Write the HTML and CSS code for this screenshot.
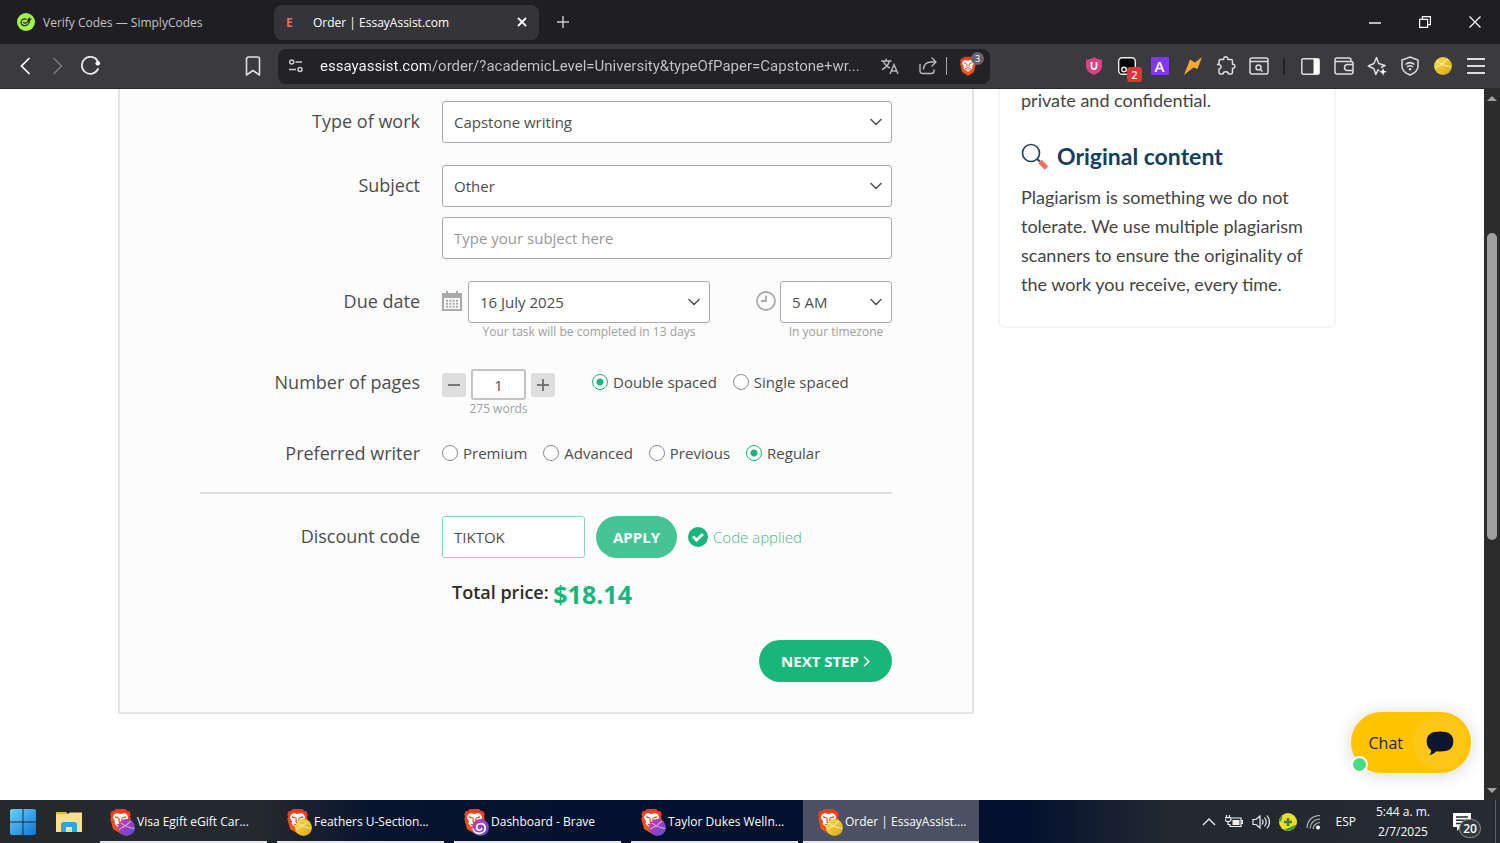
FILE: index.html
```html
<!DOCTYPE html>
<html lang="en">
<head>
<meta charset="utf-8">
<meta name="viewport" content="width=device-width, initial-scale=1">
<title>Order | EssayAssist.com</title>
<link rel="stylesheet" href="styles.css">
</head>
<body>
<svg class="sprite" aria-hidden="true">
  <defs>
    <linearGradient id="flame" x1="0" y1="0" x2="0" y2="1"><stop offset="0" stop-color="#f0391e"/><stop offset="1" stop-color="#fb5a12"/></linearGradient>
    <linearGradient id="violet" x1="0" y1="0" x2="1" y2="1"><stop offset="0" stop-color="#c23fae"/><stop offset=".5" stop-color="#9a3fc0"/><stop offset="1" stop-color="#4a55d8"/></linearGradient>
    <linearGradient id="gold" x1="0" y1="0" x2="1" y2="1"><stop offset="0" stop-color="#fbe04a"/><stop offset="1" stop-color="#d8a514"/></linearGradient>
    <linearGradient id="win" x1="0" y1="0" x2="1" y2="1"><stop offset="0" stop-color="#6bd0fa"/><stop offset="1" stop-color="#0a78d6"/></linearGradient>
    <symbol id="lion" viewBox="0 0 24 28">
      <path fill="url(#flame)" d="M7 1h10l2.500 2.500 2-.3L23 7l-.8 2.200.8 2.500-3 11L12 27.500 4 22.700l-3-11 .8-2.500L1 7l1.500-3.800 2 .3z"/>
      <path fill="#fff" d="M12 6.500l4-1 3 1.500 1.300 3.500-2.500 3.800.7 2.700-2.400 2L12 22.500l-4.100-3.500-2.400-2 .7-2.700-2.500-3.800L5 7l3-1.500z"/>
      <path fill="none" stroke="#f0441c" stroke-width="1.300" d="M6 9.500l4 1.200M18 9.500l-4 1.200M10.500 11v4l1.500 1.500 1.500-1.500v-4M8 17.500l4 1 4-1"/>
    </symbol>
    <symbol id="ball" viewBox="0 0 18 18">
      <circle cx="9" cy="9" r="9"/>
      <path fill="none" stroke="#fff" stroke-opacity=".6" stroke-width="1.100" d="M1 11Q8 8 14 2M3 4q6 5 14 6"/>
    </symbol>
    <symbol id="chevron" viewBox="0 0 12 8"><path fill="none" stroke="currentColor" stroke-width="1.600" stroke-linecap="round" stroke-linejoin="round" d="M1 1.500l5 5 5-5"/></symbol>
  </defs>
</svg>

<header class="browser">
  <div class="tabs">
    <div class="tab tab-idle">
      <svg class="favicon" viewBox="0 0 18 18"><circle cx="9" cy="9" r="9" fill="#a6f04a"/><path fill="none" stroke="#1c2a10" stroke-width="1.200" stroke-linecap="round" d="M9.500 6.200C6.500 5.200 4 7 4 9.500s2.500 3.500 5 2.800 3.700-3 3.200-5.300M6.500 9.500c1.500 1.200 3.200.4 4.500-1.200l3-2.300M11 7l1.500-2"/></svg>
      <span>Verify Codes — SimplyCodes</span>
    </div>
    <div class="tab tab-active">
      <span class="ea"><b>E</b><b class="ea-dark">A</b></span>
      <span class="tab-title">Order | EssayAssist.com</span>
      <button class="icon-btn tab-close" aria-label="Close tab"><svg width="10" height="10" viewBox="0 0 10 10"><path stroke="#fff" stroke-width="1.800" d="M1 1l8 8M9 1L1 9"/></svg></button>
    </div>
    <button class="icon-btn new-tab" aria-label="New tab"><svg width="12" height="12" viewBox="0 0 12 12"><path stroke="#ccc" stroke-width="1.400" d="M6 0v12M0 6h12"/></svg></button>
    <div class="window-controls">
      <button class="icon-btn" aria-label="Minimize"><svg width="12" height="12" viewBox="0 0 12 12"><path stroke="#bbb" stroke-width="2" d="M0 7h12"/></svg></button>
      <button class="icon-btn" aria-label="Restore"><svg width="12" height="12" viewBox="0 0 12 12"><path fill="none" stroke="#fff" stroke-width="1.200" d="M.6 3.400h8v8h-8zM3.400 3V.6h8v8H9"/></svg></button>
      <button class="icon-btn" aria-label="Close"><svg width="12" height="12" viewBox="0 0 12 12"><path stroke="#fff" stroke-width="1.200" d="M.5.5l11 11M11.500.5l-11 11"/></svg></button>
    </div>
  </div>

  <div class="toolbar">
    <button class="icon-btn slot" aria-label="Back"><svg width="10" height="18" viewBox="0 0 10 18"><path fill="none" stroke="#fff" stroke-width="1.700" stroke-linecap="round" d="M9 1.500L1.500 9 9 16.500"/></svg></button>
    <button class="icon-btn slot" aria-label="Forward"><svg width="10" height="18" viewBox="0 0 10 18"><path fill="none" stroke="#77777b" stroke-width="1.700" stroke-linecap="round" d="M1 1.500L8.500 9 1 16.500"/></svg></button>
    <button class="icon-btn slot" aria-label="Reload"><svg width="20" height="20" viewBox="0 0 20 20"><path fill="none" stroke="#e8e8e8" stroke-width="1.800" stroke-linecap="round" d="M16.500 4.700A8.500 8.500 0 1 0 17 13"/><circle cx="16.800" cy="7.300" r="2.300" fill="#fff"/></svg></button>
    <button class="icon-btn slot bookmark" aria-label="Bookmark"><svg width="16" height="20" viewBox="0 0 16 20"><path fill="none" stroke="#e0e0e0" stroke-width="1.600" stroke-linejoin="round" d="M1.500 3a2 2 0 0 1 2-2h9a2 2 0 0 1 2 2v16L8 14.500 1.500 19z"/></svg></button>
    <div class="address">
      <svg width="14" height="14" viewBox="0 0 14 14"><g fill="none" stroke="#ccc" stroke-width="1.500"><circle cx="2.700" cy="3" r="2"/><path d="M6.500 3H13M0 10.500h7"/><circle cx="11" cy="10.500" r="2"/></g></svg>
      <input class="url" type="text" aria-label="Address" value="essayassist.com/order/?academicLevel=University&amp;typeOfPaper=Capstone+wr...">
      <svg class="translate" width="18" height="17" viewBox="0 0 18 17"><path fill="none" stroke="#bbb" stroke-width="1.400" d="M0 3h10.500M5.200.5V3M2.500 3.500C4 7 6 8.800 9 10M8.200 3.500C7.500 7 5 9.500 1 11.500M9 16l4-9.500L17 16M10.300 13h5.400"/></svg>
      <svg class="share" width="18" height="18" viewBox="0 0 18 18"><path fill="none" stroke="#bbb" stroke-width="1.400" stroke-linejoin="round" stroke-linecap="round" d="M1 7.500V14a2.500 2.500 0 0 0 2.500 2.500h9A2.500 2.500 0 0 0 15 14v-1M4.500 12C5 7.500 8 5 12 5h4.500M13 1l4 4-4 4"/></svg>
      <span class="address-rule"></span>
      <span class="shields"><svg width="18" height="20"><use href="#lion"/></svg><span class="shield-count">3</span></span>
    </div>
    <div class="extensions">
      <button class="icon-btn slot" aria-label="uBlock"><svg width="16" height="18" viewBox="0 0 16 18"><path fill="#df3f83" d="M8 0c2.500 1.800 5 2.600 8 2.800V9c0 4.500-4 7.500-8 9-4-1.500-8-4.500-8-9V2.800C3 2.600 5.500 1.800 8 0z"/><path fill="none" stroke="#fff" stroke-width="1.800" d="M5.500 5v4.500a2.500 2.500 0 0 0 5 0V5"/></svg></button>
      <button class="icon-btn slot counted" aria-label="Tampermonkey"><svg width="18" height="18" viewBox="0 0 18 18"><rect x=".7" y=".7" width="16.600" height="16.600" rx="3.500" fill="#050505" stroke="#eee" stroke-width="1.400"/><circle cx="6" cy="12.500" r="2.300" fill="none" stroke="#eee" stroke-width="1.400"/></svg><span class="count">2</span></button>
      <button class="icon-btn slot" aria-label="A extension"><span class="a-box">A</span></button>
      <button class="icon-btn slot" aria-label="Lightning"><svg width="18" height="18" viewBox="0 0 18 18"><path fill="#f9a62b" d="M6 2.500L11 5.500 18 0l-4.500 12L9.500 10.500 0 18z"/></svg></button>
      <button class="icon-btn slot" aria-label="Extensions"><svg width="20" height="20" viewBox="0 0 20 20"><path fill="none" stroke="#ddd" stroke-width="1.500" stroke-linejoin="round" d="M4.500 3.500h3.200c-.6-3.600 4.700-3.600 4.100 0H15a1.500 1.500 0 0 1 1.500 1.500v3.200c3.200-.5 3.200 4.600 0 4.100V16.500a1.500 1.500 0 0 1-1.500 1.500h-2.500c0-3-5.500-3-5.500 0H4.500A1.500 1.500 0 0 1 3 16.500V13c3-.3 3-4.700-1.500-4.500L3 7.500V5a1.500 1.500 0 0 1 1.500-1.500z"/></svg></button>
      <button class="icon-btn slot" aria-label="Search page"><svg width="20" height="18" viewBox="0 0 20 18"><g fill="none" stroke="#ddd" stroke-width="1.500"><rect x="1" y="1" width="18" height="16" rx="2"/><path d="M1 4.500h18M11.500 12.500l2 2"/><circle cx="9.500" cy="10.500" r="2.500"/></g></svg></button>
      <span class="toolbar-rule"></span>
      <button class="icon-btn slot" aria-label="Sidebar"><svg width="19" height="17" viewBox="0 0 19 17"><rect x=".8" y=".8" width="17.400" height="15.400" rx="1.500" fill="none" stroke="#ddd" stroke-width="1.500"/><path fill="#fff" d="M12.500 1H18v15h-5.500z"/></svg></button>
      <button class="icon-btn slot" aria-label="Wallet"><svg width="20" height="18" viewBox="0 0 20 18"><g fill="none" stroke="#ddd" stroke-width="1.500"><path d="M17 4.500V3a2 2 0 0 0-2-2H3a2 2 0 0 0-2 2v12a2 2 0 0 0 2 2h14a2 2 0 0 0 2-2V6.500a2 2 0 0 0-2-2H1"/><path d="M19 7.500h-5.500a3 3 0 0 0 0 6H19"/></g></svg></button>
      <button class="icon-btn slot" aria-label="Leo AI"><svg width="20" height="20" viewBox="0 0 20 20"><path fill="none" stroke="#ddd" stroke-width="1.500" stroke-linejoin="round" d="M12.500 14.500l-1.600-.5-2 4.500-2-5.800L1.300 10 7 7.500 9.500 1.500l2.200 6L18 9.500l-4 2"/><path fill="#fff" d="M16 12l1 2.800 2.800 1-2.800 1-1 2.900-1-2.900-2.800-1 2.800-1z"/></svg></button>
      <button class="icon-btn slot" aria-label="VPN"><svg width="18" height="20" viewBox="0 0 18 20"><g fill="none" stroke="#ddd" stroke-width="1.500"><path d="M9 1l8 3v6c0 4-3 7-8 9-5-2-8-5-8-9V4z"/><path d="M4.500 8.500c3-2.500 6-2.500 9 0M6 11c2-1.600 4-1.600 6 0"/></g><circle cx="9" cy="13.300" r="1.200" fill="#ddd"/></svg></button>
      <button class="icon-btn slot" aria-label="Profile"><svg width="18" height="18" fill="url(#gold)"><use href="#ball"/></svg></button>
      <button class="icon-btn slot" aria-label="Menu"><svg width="18" height="16" viewBox="0 0 18 16"><path stroke="#ddd" stroke-width="1.800" d="M0 1h18M0 8h18M0 15h18"/></svg></button>
    </div>
  </div>
</header>

<div class="viewport">
  <main class="page">
    <form class="order" onsubmit="return false">
      <div class="row">
        <label class="label" for="work">Type of work</label>
        <div class="select"><select id="work"><option>Capstone writing</option></select><svg><use href="#chevron"/></svg></div>
      </div>
      <div class="row">
        <label class="label" for="subject">Subject</label>
        <div class="stack">
          <div class="select"><select id="subject"><option>Other</option></select><svg><use href="#chevron"/></svg></div>
          <input class="box" type="text" placeholder="Type your subject here" aria-label="Your subject">
        </div>
      </div>
      <div class="row">
        <label class="label" for="due">Due date</label>
        <div class="due">
          <svg class="due-icon" viewBox="0 0 20 20"><path fill="#aaa" d="M0 2h4V0h2v2h8V0h2v2h4v18H0z"/><path fill="#fcfcfc" d="M2 7h16v11H2z"/><path stroke="#aaa" stroke-width="2" stroke-dasharray="2 1.300" d="M4 9.700h12M4 12.700h12M4 15.700h12"/></svg>
          <div class="date">
            <div class="select"><select id="due"><option>16 July 2025</option></select><svg><use href="#chevron"/></svg></div>
            <p class="hint">Your task will be completed in 13 days</p>
          </div>
          <svg class="due-icon clock" viewBox="0 0 20 20"><circle cx="10" cy="10" r="9" fill="none" stroke="#aaa" stroke-width="1.800"/><path fill="none" stroke="#aaa" stroke-width="1.800" d="M10 4.500V10H5"/></svg>
          <div class="hour">
            <div class="select"><select id="hour" aria-label="Hour"><option>5 AM</option></select><svg><use href="#chevron"/></svg></div>
            <p class="hint">In your timezone</p>
          </div>
        </div>
      </div>
      <div class="row row-pages">
        <label class="label" for="pages">Number of pages</label>
        <div class="pages">
          <div class="counter">
            <button type="button" class="step" aria-label="Fewer pages"><svg width="12" height="12" viewBox="0 0 12 12"><path stroke="#777" stroke-width="2" d="M0 6h12"/></svg></button>
            <input class="box page-count" id="pages" type="text" value="1">
            <button type="button" class="step" aria-label="More pages"><svg width="12" height="12" viewBox="0 0 12 12"><path stroke="#777" stroke-width="2" d="M0 6h12M6 0v12"/></svg></button>
            <p class="hint words">275 words</p>
          </div>
          <div class="radios">
            <label><input type="radio" name="spacing" checked>Double spaced</label>
            <label><input type="radio" name="spacing">Single spaced</label>
          </div>
        </div>
      </div>
      <div class="row row-writer">
        <span class="label" id="writer">Preferred writer</span>
        <div class="radios" role="radiogroup" aria-labelledby="writer">
          <label><input type="radio" name="writer">Premium</label>
          <label><input type="radio" name="writer">Advanced</label>
          <label><input type="radio" name="writer">Previous</label>
          <label><input type="radio" name="writer" checked>Regular</label>
        </div>
      </div>
      <hr class="rule">
      <div class="row">
        <label class="label" for="code">Discount code</label>
        <div class="discount">
          <input class="box code" id="code" type="text" value="TIKTOK">
          <button type="button" class="pill apply">APPLY</button>
          <span class="applied"><svg width="20" height="20" viewBox="0 0 20 20"><circle cx="10" cy="10" r="10" fill="#19b67b"/><path fill="none" stroke="#fff" stroke-width="2.800" d="M5 9.500l3.500 3.500L15 7"/></svg>Code applied</span>
        </div>
      </div>
      <p class="total">Total price: <strong>$18.14</strong></p>
      <button type="submit" class="pill next">NEXT STEP<svg width="7" height="11" viewBox="0 0 7 11"><path fill="none" stroke="#fff" stroke-width="1.600" d="M1 .8l4.700 4.700L1 10.200"/></svg></button>
    </form>
    <aside class="benefits">
      <p class="lead">private and confidential.</p>
      <h2><svg width="28" height="28" viewBox="0 0 28 28"><circle cx="10" cy="10" r="8.500" fill="none" stroke="#2c4356" stroke-width="1.700"/><path stroke="#2c4356" stroke-width="2" d="M16 16l3 2.500"/><path stroke="#f5705a" stroke-width="5" d="M19 18.500l6.500 6.500"/></svg>Original content</h2>
      <p>Plagiarism is something we do not tolerate. We use multiple plagiarism scanners to ensure the originality of the work you receive, every time.</p>
    </aside>
  </main>
  <button class="chat">Chat<span class="chat-disc"><svg width="28" height="26" viewBox="0 0 28 26"><path fill="#0d1830" d="M14 1.500c9 0 13.300 3 13.300 10S23 21.500 14 21.500c-1.500 0-2.700 0-3.800-.3C8.500 23 6.500 24.500 3.700 25c1-1.500 1.500-3 1.300-5C2 18.300.7 15.500.7 11.500c0-7 4.300-10 13.300-10z"/></svg></span><span class="online"></span></button>
  <div class="scrollbar" aria-hidden="true"><span class="arrow up"></span><span class="thumb"></span><span class="arrow down"></span></div>
</div>

<footer class="taskbar">
  <button class="icon-btn start" aria-label="Start"><svg width="26" height="26" viewBox="0 0 26 26"><path fill="url(#win)" d="M0 2a2 2 0 0 1 2-2h10.500v12.500H0zM13.500 0H24a2 2 0 0 1 2 2v10.500H13.500zM0 13.500h12.500V26H2a2 2 0 0 1-2-2zM13.500 13.500H26V24a2 2 0 0 1-2 2H13.500z"/></svg></button>
  <button class="icon-btn explorer" aria-label="File Explorer"><svg width="26" height="22" viewBox="0 0 26 22"><path fill="#e5b93c" d="M0 1h10l3 3H0z"/><path fill="#fde08d" d="M0 3.500L12 3l2-1.500h12V21H0z"/><path fill="#2da6df" d="M5 21V12.500L7 11h12l2 1.500V21h-5v-5h-6v5z"/></svg></button>
  <button class="task"><span class="task-icon"><svg class="task-lion"><use href="#lion"/></svg><svg class="task-ball" fill="url(#violet)"><use href="#ball"/></svg></span>Visa Egift eGift Car...</button>
  <button class="task"><span class="task-icon"><svg class="task-lion"><use href="#lion"/></svg><svg class="task-ball" fill="url(#gold)"><use href="#ball"/></svg></span>Feathers U-Section...</button>
  <button class="task"><span class="task-icon"><svg class="task-lion"><use href="#lion"/></svg><svg class="task-ball" viewBox="0 0 18 18"><circle cx="9" cy="9" r="9" fill="url(#violet)"/><path fill="none" stroke="#fff" stroke-width="1.800" d="M1 10c2 8 14 6 13-1-1-6-9-5-9 0 0 3.500 5 4 5.500.5"/></svg></span>Dashboard - Brave</button>
  <button class="task"><span class="task-icon"><svg class="task-lion"><use href="#lion"/></svg><svg class="task-ball" fill="url(#violet)"><use href="#ball"/></svg></span>Taylor Dukes Welln...</button>
  <button class="task task-active"><span class="task-icon"><svg class="task-lion"><use href="#lion"/></svg><svg class="task-ball" fill="url(#gold)"><use href="#ball"/></svg></span>Order | EssayAssist....</button>
  <div class="tray">
    <svg width="14" height="8" viewBox="0 0 14 8"><path fill="none" stroke="#eee" stroke-width="1.400" d="M1 7l6-6 6 6"/></svg>
    <svg width="18" height="14" viewBox="0 0 18 14"><path fill="none" stroke="#eee" stroke-width="1.200" d="M7 3h9v8.500H5V9M16.500 5.500h1v3h-1M1.500 0v2.500M4.500 0v2.500M0 2.700h6V5L4.500 6.500h-3L0 5zM3 6.500v3h2"/><path fill="#eee" d="M7.500 5h7v5h-7z"/></svg>
    <svg width="18" height="16" viewBox="0 0 18 16"><path fill="none" stroke="#eee" stroke-width="1.200" d="M1 5.500h3L8 2v12l-4-3.500H1zM10 5.500q2 2.500 0 5M12.500 3.500q3.500 4.500 0 9M15 1.500q5 6.500 0 13"/></svg>
    <svg width="18" height="18" viewBox="0 0 18 18"><circle cx="9" cy="9" r="9" fill="#f1dc2d"/><path fill="#3e9b3c" d="M0 9a9 9 0 0 1 3-6.700Q4 8 0 9zM5 17q8-4 12.500-5.500A9 9 0 0 1 5 17z"/><path stroke="#2d8a34" stroke-width="2.600" d="M9 5v8M5 9h8"/></svg>
    <svg width="16" height="16" viewBox="0 0 16 16"><g fill="none" stroke="#bbb" stroke-width="1.200"><path d="M1 14Q2 2 14 1.500M4 14.500Q5 5.500 14 5M7 15q1-6 7-6.500"/></g><circle cx="12" cy="13.500" r="2" fill="#fff"/></svg>
    <span class="lang">ESP</span>
    <span class="time">5:44 a. m.<br>2/7/2025</span>
    <span class="notes"><svg width="18" height="18" viewBox="0 0 18 18"><path fill="#fff" d="M0 0h18v14H8l-4 4v-4H0z"/><path stroke="#252b32" stroke-width="1.400" d="M3 4h12M3 7.300h12M3 10.500h7"/></svg><span class="notes-count">20</span></span>
    <span class="desktop-edge"></span>
  </div>
</footer>
</body>
</html>
```
FILE: styles.css
```css
* { box-sizing: border-box; }

body {
  display: flex;
  flex-direction: column;
  height: 100vh;
  margin: 0;
  overflow: hidden;
  background: #fff;
  color: #4d4d4d;
  font-family: "Open Sans", "Noto Sans", sans-serif;
}

p, h2 { margin: 0; }
button, input, select { font: inherit; color: inherit; }
svg { flex: none; display: block; }
.sprite { position: absolute; width: 0; height: 0; }

.icon-btn {
  display: flex;
  align-items: center;
  justify-content: center;
  padding: 0;
  border: 0;
  background: none;
}

/* Browser chrome */
.tabs {
  display: flex;
  align-items: center;
  height: 44px;
  background: #1f1e23;
  color: #c3c3c5;
  font-size: 12px;
}
.tab { display: flex; align-items: center; height: 35px; border-radius: 8px; }
.tab-idle { width: 265px; margin-left: 9px; padding-left: 8px; gap: 8px; }
.tab-active { width: 265px; padding: 0 12px; background: #353439; color: #fff; }
.favicon { width: 18px; height: 18px; }
.ea { display: flex; width: 27px; color: #ee6c55; font-size: 12px; }
.ea-dark { color: #2a3947; }
.tab-title { flex: 1; }
.new-tab { width: 24px; height: 24px; margin-left: 12px; }
.window-controls { display: flex; margin-left: auto; }
.window-controls .icon-btn { width: 50px; height: 44px; }

.toolbar {
  display: flex;
  align-items: center;
  height: 45px;
  padding: 0 8px;
  border-bottom: 1px solid #29282c;
  background: #3b3a3f;
}
.slot { flex: none; width: 33px; height: 33px; }
.bookmark { margin-left: 129px; }
.address {
  display: flex;
  align-items: center;
  flex: 0 1 712px;
  min-width: 0;
  height: 35px;
  margin-left: 9px;
  padding: 0 8px 0 11px;
  border-radius: 8px;
  background: #232227;
}
.url {
  flex: 1;
  min-width: 0;
  margin-left: 17px;
  padding: 0;
  border: 0;
  outline: 0;
  background: linear-gradient(90deg, #fff 106px, #c6c6c8 106px) text;
  color: transparent;
  font-family: Roboto, sans-serif;
  font-size: 15px;
}
.translate { margin-left: 12px; }
.share { margin-left: 20px; }
.address-rule { width: 1px; height: 18px; margin: 0 12px 0 9px; background: #aaa; }
.shields { position: relative; margin-right: 5px; }
.shield-count {
  position: absolute;
  top: -4px;
  right: -7px;
  width: 13px;
  height: 13px;
  border-radius: 7px;
  background: #63646f;
  color: #fff;
  font-size: 9px;
  line-height: 13px;
  text-align: center;
}
.extensions { display: flex; align-items: center; margin-left: auto; }
.toolbar-rule { width: 2px; height: 17px; margin: 0 9px 0 8px; background: #232227; }
.counted { position: relative; }
.count {
  position: absolute;
  right: 1px;
  bottom: 1px;
  width: 15px;
  height: 15px;
  border-radius: 3px;
  background: #e33237;
  color: #fff;
  font-size: 11px;
  font-weight: 600;
  line-height: 15px;
}
.a-box {
  width: 18px;
  height: 18px;
  background: #8336f0;
  color: #fff;
  font-size: 15px;
  font-weight: 600;
  line-height: 18px;
}

/* Page */
.viewport { position: relative; display: flex; flex: 1; min-height: 0; }
.page {
  display: flex;
  align-items: flex-start;
  flex: 1;
  gap: 24px;
  min-width: 0;
  padding: 0 148px 0 118px;
}
.order {
  display: flex;
  flex-direction: column;
  flex: 1;
  gap: 22px;
  min-width: 0;
  padding: 12px 80px 30px;
  border: 2px solid #e4e4e4;
  border-top: 0;
  background: #fcfcfc;
  font-size: 15px;
}
.row {
  display: grid;
  grid-template-columns: minmax(150px, 220px) minmax(0, 1fr);
  column-gap: 22px;
}
.label { font-size: 18px; line-height: 40px; text-align: right; }
.stack { display: grid; gap: 10px; }
.select { position: relative; }
.select select, .box {
  display: block;
  width: 100%;
  height: 42px;
  padding: 0 11px;
  border: 1px solid #a9a9a9;
  border-radius: 3px;
  outline: 0;
  background: #fff;
  appearance: none;
}
.box::placeholder { color: #999; opacity: 1; }
.select svg {
  position: absolute;
  top: 17px;
  right: 10px;
  width: 12px;
  height: 8px;
  color: #555;
  pointer-events: none;
}
.hint { color: #a0a0a0; font-size: 12px; line-height: 18px; text-align: center; white-space: nowrap; }

.due { display: flex; align-items: flex-start; }
.due-icon { width: 20px; height: 20px; margin-top: 10px; }
.date { width: 242px; margin-left: 6px; }
.clock { margin-left: auto; }
.hour { width: 112px; margin-left: 4px; }

.row-pages { margin-top: 6px; }
.row-pages .label, .row-writer .label { line-height: 26px; }
.pages { display: flex; }
.counter {
  display: grid;
  grid-template-columns: 24px 55px 24px;
  column-gap: 5px;
  align-items: center;
}
.step {
  display: grid;
  place-items: center;
  width: 24px;
  height: 24px;
  padding: 0;
  border: 0;
  border-radius: 3px;
  background: #dedede;
}
.page-count { height: 31px; padding: 0; border-width: 2px; border-color: #c3c3c3; text-align: center; }
.words { grid-column: 1 / -1; }
.radios { display: flex; align-items: flex-start; gap: 16px; line-height: 26px; white-space: nowrap; }
.pages .radios { margin-left: 37px; }
.radios label { display: flex; align-items: center; gap: 5px; }
.radios input {
  width: 16px;
  height: 16px;
  margin: 0;
  border: 1px solid #8c8c8c;
  border-radius: 50%;
  background: #fff;
  appearance: none;
}
.radios input:checked {
  border-color: #19b67b;
  background: radial-gradient(circle, #19b67b 3px, #fff 4px);
}
.rule { width: 100%; height: 2px; margin: 4px 0 0; border: 0; background: #dedede; }

.discount { display: flex; align-items: center; }
.code { width: 143px; border-color: #8bd7b8; }
.pill {
  height: 42px;
  border: 0;
  border-radius: 21px;
  background: #19b67b;
  color: #fff;
  font-size: 15px;
  font-weight: 700;
}
.apply { margin-left: 11px; padding: 0 17px; background: #47c495; }
.applied { display: flex; align-items: center; gap: 5px; margin-left: 11px; color: #4db88c; font-weight: 300; white-space: nowrap; }
.total { margin: -6px 0 0 252px; color: #2b2b2b; font-size: 18px; font-weight: 600; line-height: 36px; }
.total strong { color: #19b67b; font-size: 25px; font-weight: 700; vertical-align: middle; }
.next { display: flex; align-items: center; align-self: flex-end; gap: 4px; margin-top: 6px; padding: 0 22px; }

.benefits {
  width: 338px;
  padding: 0 21px 27px;
  border: 2px solid #f5f5f5;
  border-top: 0;
  border-radius: 0 0 6px 6px;
  color: #444;
  font-family: Lato, sans-serif;
  font-size: 18px;
  line-height: 29px;
}
.lead { margin-top: -3px; }
.benefits h2 {
  display: flex;
  align-items: center;
  gap: 8px;
  margin: 27px 0 12px;
  color: #123f60;
  font-size: 23px;
  font-weight: 700;
  line-height: 29px;
}

.chat {
  position: absolute;
  right: 29px;
  bottom: 27px;
  display: flex;
  align-items: center;
  gap: 10px;
  height: 61px;
  padding: 0 5px 0 18px;
  border: 0;
  border-radius: 31px;
  background: #ffc400;
  box-shadow: 0 2px 18px rgba(0, 0, 0, .16);
  color: #222;
  font-size: 16px;
}
.chat-disc { display: grid; place-items: center; width: 53px; height: 53px; border-radius: 50%; background: #ffc61a; }
.online {
  position: absolute;
  left: 0;
  bottom: 0;
  width: 17px;
  height: 17px;
  border: 2px solid #fff;
  border-radius: 50%;
  background: #4ade80;
}

.scrollbar {
  display: flex;
  flex-direction: column;
  align-items: center;
  width: 16px;
  padding: 7px 0;
  background: #2c2c2c;
}
.arrow { border: 5px solid transparent; }
.up { border-top: 0; border-bottom-color: #9f9f9f; }
.down { margin-top: auto; border-bottom: 0; border-top-color: #9f9f9f; }
.thumb { width: 10px; height: 44%; margin-top: 132px; border-radius: 5px; background: #9f9f9f; }

/* Taskbar */
.taskbar {
  display: flex;
  align-items: center;
  height: 43px;
  background: linear-gradient(90deg, #25292c 0, #252a2f 17%, #07142f 25%, #03102e 45%, #03102e 68%, #222932 78%, #252b32 100%);
  color: #fff;
  font-size: 12px;
}
.start { margin-left: 10px; }
.explorer { margin: 0 18px 0 20px; }
.task {
  display: flex;
  align-items: center;
  flex: 0 1 167px;
  gap: 2px;
  height: 43px;
  margin-right: 10px;
  padding: 2px 0 0 9px;
  border: 0;
  border-bottom: 2px solid #e5e7ec;
  background: none;
  white-space: nowrap;
}
.task-active { flex-basis: 176px; margin-left: -5px; padding-left: 14px; background: #4b5163; }
.task-icon { position: relative; width: 26px; height: 28px; }
.task-lion { width: 23px; height: 26px; }
.task-ball { position: absolute; right: 0; bottom: 0; width: 17px; height: 17px; }
.tray { display: flex; align-items: center; gap: 9px; margin-left: auto; padding-right: 4px; }
.lang { margin-left: 4px; }
.time { margin-left: 11px; line-height: 20px; text-align: center; }
.notes { position: relative; width: 28px; margin-left: 14px; }
.desktop-edge { width: 1px; height: 43px; margin-left: 5px; background: #5d6268; }
.notes-count {
  position: absolute;
  left: 6px;
  top: 6px;
  width: 22px;
  border: 1px solid #8d9297;
  border-radius: 10px;
  background: #33393f;
  font-size: 12px;
  font-weight: 600;
  line-height: 17px;
  text-align: center;
}
```
